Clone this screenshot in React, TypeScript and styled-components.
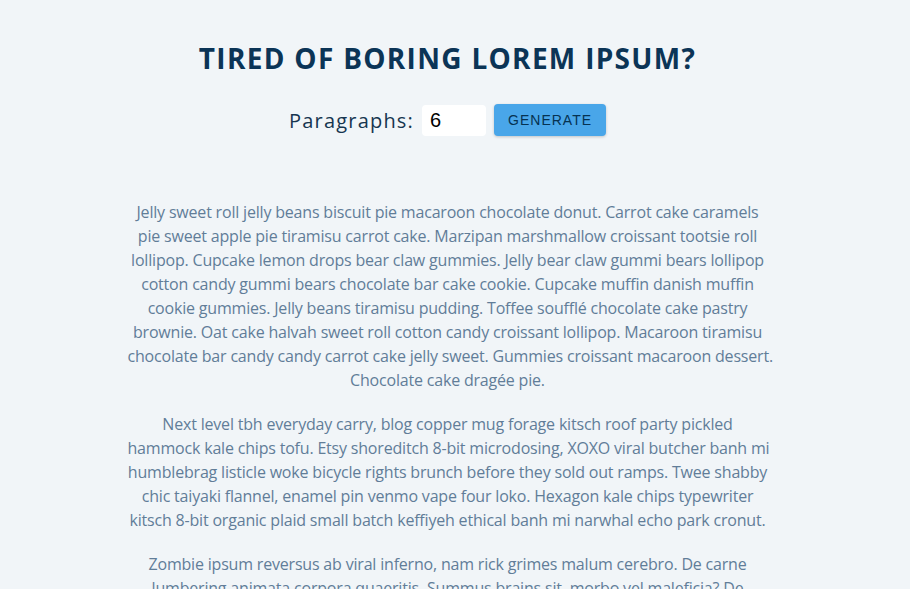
import React from "react";
import styled, { createGlobalStyle } from "styled-components";

const GlobalStyle = createGlobalStyle`
  *, *::before, *::after { box-sizing: border-box; }
  html, body { margin: 0; padding: 0; }
  body {
    background: #f1f5f8;
    font-family: "Open Sans", "Noto Sans", sans-serif;
    overflow: hidden;
  }
`;

const Page = styled.main`
  padding-right: 15px;
`;

const Section = styled.section`
  width: 640px;
  margin: 0 auto;
  padding-top: 41px;
  text-align: center;
`;

const Title = styled.h3`
  margin: 0;
  font-family: "Open Sans", sans-serif;
  font-weight: 700;
  font-size: 28px;
  line-height: 35px;
  letter-spacing: 1.3px;
  text-transform: uppercase;
  color: #0b3456;
`;

const Form = styled.form`
  display: flex;
  justify-content: center;
  align-items: center;
  margin: 28px 0 64px;
`;

const Label = styled.label`
  font-size: 20px;
  letter-spacing: 1.2px;
  color: #163650;
`;

const NumberInput = styled.input`
  width: 64px;
  height: 31px;
  margin: 0 8px;
  padding: 4px 8px;
  border: none;
  border-radius: 4px;
  background: #fff;
  font-family: "Liberation Sans", Arial, sans-serif;
  font-size: 20px;
  color: #000;
  outline: none;
`;

const Button = styled.button`
  height: 32px;
  padding: 6px 12px;
  border: 2px solid transparent;
  border-radius: 4px;
  background: #49a6e9;
  color: #063251;
  font-family: "Liberation Sans", Arial, sans-serif;
  font-size: 14px;
  letter-spacing: 1px;
  text-transform: uppercase;
  box-shadow: 0 1px 3px rgba(0, 0, 0, 0.2);
  cursor: pointer;
`;

const Result = styled.article``;

const Paragraph = styled.p`
  margin: 0 0 20px;
  font-size: 16px;
  line-height: 24px;
  letter-spacing: -0.19px;
  color: #617d98;
  white-space: nowrap;
`;

const paragraphs: string[][] = [
  [
    "Jelly sweet roll jelly beans biscuit pie macaroon chocolate donut. Carrot cake caramels",
    "pie sweet apple pie tiramisu carrot cake. Marzipan marshmallow croissant tootsie roll",
    "lollipop. Cupcake lemon drops bear claw gummies. Jelly bear claw gummi bears lollipop",
    "cotton candy gummi bears chocolate bar cake cookie. Cupcake muffin danish muffin",
    "cookie gummies. Jelly beans tiramisu pudding. Toffee soufflé chocolate cake pastry",
    "brownie. Oat cake halvah sweet roll cotton candy croissant lollipop. Macaroon tiramisu",
    "chocolate bar candy candy carrot cake jelly sweet. Gummies croissant macaroon dessert.",
    "Chocolate cake dragée pie.",
  ],
  [
    "Next level tbh everyday carry, blog copper mug forage kitsch roof party pickled",
    "hammock kale chips tofu. Etsy shoreditch 8-bit microdosing, XOXO viral butcher banh mi",
    "humblebrag listicle woke bicycle rights brunch before they sold out ramps. Twee shabby",
    "chic taiyaki flannel, enamel pin venmo vape four loko. Hexagon kale chips typewriter",
    "kitsch 8-bit organic plaid small batch keffiyeh ethical banh mi narwhal echo park cronut.",
  ],
  [
    "Zombie ipsum reversus ab viral inferno, nam rick grimes malum cerebro. De carne",
    "lumbering animata corpora quaeritis. Summus brains sit, morbo vel maleficia? De",
    "apocalypsi gorger omero undead survivor dictum mauris. Hi mindless mortuis soulless",
    "creaturas, imo evil stalking monstra adventus resi dentevil vultus comedat cerebella.",
  ],
];

export default function App() {
  return (
    <>
      <GlobalStyle />
      <Page>
        <Section>
          <Title>tired of boring lorem ipsum?</Title>
          <Form onSubmit={(e) => e.preventDefault()}>
            <Label htmlFor="amount">Paragraphs:</Label>
            <NumberInput type="number" id="amount" name="amount" defaultValue={6} />
            <Button type="submit">generate</Button>
          </Form>
          <Result>
            {paragraphs.map((lines, i) => (
              <Paragraph key={i}>
                {lines.map((line, j) => (
                  <React.Fragment key={j}>
                    {line}
                    {j < lines.length - 1 && <br />}
                  </React.Fragment>
                ))}
              </Paragraph>
            ))}
          </Result>
        </Section>
      </Page>
    </>
  );
}
